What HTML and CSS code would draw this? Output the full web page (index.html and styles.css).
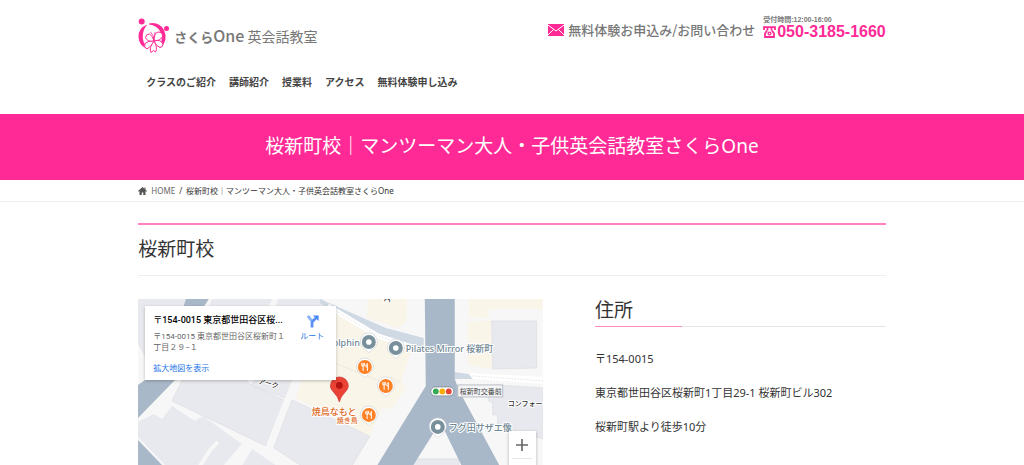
FILE: index.html
```html
<!DOCTYPE html>
<html lang="ja">
<head>
<meta charset="utf-8">
<meta name="viewport" content="width=device-width, initial-scale=1">
<title>桜新町校｜マンツーマン大人・子供英会話教室さくらOne</title>
<link rel="stylesheet" href="styles.css">
</head>
<body>
<header class="site-header">
  <div class="container">
    <div class="header-top">
      <a class="logo" href="#">
        <svg class="logo-mark" viewBox="0 0 32 36" aria-hidden="true">
          <g fill="#ff2a96">
            <circle cx="3.700" cy="3.500" r="3"/>
            <circle cx="28.500" cy="10.600" r="2.500"/>
            <path d="M9.500 6.500Q0 10 .5 19Q1 27 8 30.500L9 29Q4.500 25 4.800 18Q5 11 9.500 6.500Z"/>
            <path d="M11 5.500Q21 3.500 26 12Q30.500 22 22.500 30L21 29Q25.500 22 22.500 14Q19 7 11 6.500Z"/>
          </g>
          <g fill="#fff" stroke="#ff2a96" stroke-width="1" stroke-linejoin="round">
            <path d="M16 23Q15 16 20 14Q25 14 24.500 19Q22 23 16 23Z"/>
            <path d="M16 23Q23 21 25 26Q25 29 22 29.500Q18 28 16 23Z"/>
            <path d="M16 23Q20 30 17.500 34L15.500 32.500L13 34.500Q10.500 30 16 23Z"/>
            <path d="M16 23Q13 29 9 31Q5.500 29 7 25.500Q11 22 16 23Z"/>
            <path d="M16 23Q9 24 7.500 19.500Q8 16 11.500 16Q15 18 16 23Z"/>
            <path d="M16 23Q16 17 12.500 14M16 23Q17 17 17 14" fill="none" stroke-width=".8"/>
          </g>
        </svg>
        <span class="logo-text"><b>さくら<span class="logo-one">One</span></b> 英会話教室</span>
      </a>
      <div class="contact">
        <a class="contact-mail" href="#">
          <svg class="mail-icon" viewBox="0 0 16 12" aria-hidden="true">
            <rect width="16" height="12" fill="#ff2a96"/>
            <path d="M0 1L8 7L16 1M0 11L5.500 5.500M16 11L10.500 5.500" fill="none" stroke="#fff" stroke-width="1"/>
          </svg>
          <span>無料体験お申込み/お問い合わせ</span>
        </a>
        <div class="contact-tel">
          <span class="hours">受付時間:12:00-16:00</span>
          <a class="tel" href="tel:05031851660">
            <svg class="tel-icon" viewBox="0 0 13 12" fill="none" stroke="#ff2a96" aria-hidden="true">
              <path d="M1 4V1.200H12V4M4.500 1V4.500M8.500 1V4.500" stroke-width="1.800"/>
              <path d="M4 4.500L2 7.500V11H11V7.500L9 4.500" stroke-width="1.800"/>
              <circle cx="6.500" cy="7.500" r="1.400" stroke-width="1.400"/>
            </svg>
            <span>050-3185-1660</span>
          </a>
        </div>
      </div>
    </div>
    <nav class="global-nav">
      <a href="#">クラスのご紹介</a>
      <a href="#">講師紹介</a>
      <a href="#">授業料</a>
      <a href="#">アクセス</a>
      <a href="#">無料体験申し込み</a>
    </nav>
  </div>
</header>

<div class="page-title">桜新町校｜マンツーマン大人・子供英会話教室さくらOne</div>

<nav class="breadcrumb">
  <div class="container crumbs">
    <svg class="home-icon" viewBox="0 0 18 16" aria-hidden="true"><path d="M9 0L0 8L1.200 9.400L3 8V16H7.500V11H10.500V16H15V8L16.800 9.400L18 8L15 5.300V1H13V3.500Z" fill="#555"/></svg>
    <a href="#">HOME</a>
    <span>/</span>
    <span class="current">桜新町校｜マンツーマン大人・子供英会話教室さくらOne</span>
  </div>
</nav>

<main class="container">
  <h1 class="section-title">桜新町校</h1>
  <div class="columns">
    <div class="map">
      <svg class="map-canvas" viewBox="0 0 405 167" preserveAspectRatio="xMinYMin slice" role="img" aria-label="地図">
        <defs>
          <g id="pin">
            <path d="M0 11L-4 7A8.500 8.500 0 1 1 4 7Z" fill="#fff" stroke="#c9ccd0" stroke-width=".6"/>
            <circle r="7"/>
          </g>
          <g id="place"><use href="#pin" fill="#78909c"/><circle r="2.800" fill="#fff"/></g>
          <g id="food">
            <use href="#pin" fill="#ff8126"/>
            <path d="M-3 -4V-1M-1.700 -4V-1M-3 -1H-.5M-.5 -4V-1M-1.700 -1V4M2.500 4V-3.500Q1 -3 1 0H2.500" fill="none" stroke="#fff" stroke-width="1"/>
          </g>
        </defs>
        <rect width="405" height="167" fill="#f7f7f8"/>
        <g fill="#e8e9ee">
          <path d="M0 0H48L46 10L20 40L8 60L0 45Z"/>
          <path d="M74 0H135L128 10H70Z"/>
          <path d="M140 0H184L198 12H136Z"/>
          <path d="M55 60L34 102L128 147L148 102L113 86L90 65Z" stroke="#dcdde3" stroke-width=".7"/>
          <path d="M120 78H156L147 99L113 86Z" stroke="#dcdde3" stroke-width=".7"/>
          <path d="M0 123L16 115L24 120L34 107L57 122L65 117L104 145L85 167H28L0 138Z"/>
          <path d="M154 101L232 137L214 167H164L136 149Z" stroke="#dcdde3" stroke-width=".7"/>
          <path d="M114 150L139 167H104Z"/>
        </g>
        <path d="M62 167L73 150L80 143M130 147L156 82" stroke="#f7f7f8" stroke-width="4" fill="none"/>
        <g fill="#f9f5e9">
          <path d="M180 8L198 13L276 44L263 84L269 87L254 110L244 109L232 137L158 99L164 80Z"/>
          <path d="M230 0H269V18Q268 28 258 29L247 24L229 19Z"/>
          <path d="M331 0H405V10H351V19L331 18Z"/>
          <path d="M330 23L354 21V70L330 66Z"/>
        </g>
        <path d="M191 62L247 84M253 78L263 84" stroke="#eee9df" fill="none"/>
        <g fill="#e8e9ee" stroke="#dcdde3" stroke-width=".7">
          <path d="M354 22H399V69L355 70Z"/>
          <path d="M358 86L405 89V140L371 130L360 125V116H355V104L351 102V92Z"/>
          <path d="M272 160H321V168H272Z"/>
        </g>
        <path d="M182 0L248 29L286 39V51L273 51L243 38L182 4Z" fill="#cfd9e3"/>
        <path d="M190 7L240 37L274 48" fill="none" stroke="#fff" stroke-width="5"/>
        <path d="M190 7L240 37L274 48" fill="none" stroke="#dadddf" stroke-dasharray="1 2"/>
        <path d="M316 73L331 75L335 80H317Z" fill="#cfd9e3"/>
        <path d="M331 74L405 78V85L335 80Z" fill="#fff"/>
        <path d="M335 77L405 82" stroke="#d4d7da" stroke-dasharray="1 2"/>
        <g fill="#a9b8c9">
          <path d="M287 0H317V80L321 91L362 167H324L306 130L297 132L275 167H239L288 87Z"/>
          <path d="M48 0H71L65 9H45Z"/>
          <path d="M0 86L14 76L38 80L0 119Z"/>
          <path d="M0 141L25 167H0Z"/>
        </g>
        <g class="map-labels">
          <text class="place-label" x="222" y="47" text-anchor="end">Dolphin</text>
          <text class="place-label" x="268" y="53">Pilates Mirror 桜新町</text>
          <text class="place-label" x="311" y="132">フグ田サザエ像</text>
          <text class="food-label" x="174" y="116">焼鳥なもと</text>
          <text class="food-label small" x="199" y="124">焼き鳥</text>
          <text class="building-label" x="370" y="107">コンフォー</text>
          <text class="building-label" transform="translate(120 84) rotate(16)">アーク</text>
          <text class="building-label" transform="translate(247 -3) rotate(90)">て</text>
        </g>
        <rect x="320" y="86" width="45" height="12" fill="#f4f5f7" stroke="#b9bdc3"/>
        <text class="crossing-label" x="322" y="95">桜新町交番前</text>
        <rect x="293" y="88" width="23" height="9" rx="4.500" fill="#fff" stroke="#7f8790" stroke-width=".8"/>
        <circle cx="298" cy="92.500" r="2.900" fill="#34a853"/>
        <circle cx="304.500" cy="92.500" r="2.900" fill="#fbab05"/>
        <circle cx="311" cy="92.500" r="2.900" fill="#ea4335"/>
        <use href="#place" x="231" y="43"/>
        <use href="#place" x="258" y="49"/>
        <use href="#place" x="300" y="128"/>
        <use href="#food" x="227" y="68"/>
        <use href="#food" x="248" y="87"/>
        <use href="#food" x="231" y="116"/>
        <path d="M201.500 103Q200.500 98 196 93.500Q192.500 90 192.500 87A9 9 0 0 1 210.500 87Q210.500 90 207 93.500Q202.500 98 201.500 103Z" fill="#ea4335" stroke="#c5221f" stroke-width=".6"/>
        <circle cx="201.500" cy="86.500" r="3.400" fill="#b31412"/>
      </svg>
      <div class="map-card">
        <div class="map-address">
          <strong>〒154-0015 東京都世田谷区桜...</strong>
          <p>〒154-0015 東京都世田谷区桜新町１丁目２９−１</p>
          <a href="#">拡大地図を表示</a>
        </div>
        <a class="map-route" href="#">
          <svg class="route-icon" viewBox="0 0 14 14" fill="none" aria-hidden="true">
            <path d="M2 1.500L7 8" stroke="#8ab4f8" stroke-width="3"/>
            <path d="M6.500 14V9Q6.500 8 7.500 7L10.500 4" stroke="#5b8ff5" stroke-width="3"/>
            <path d="M7.500 1H13.500V7Z" fill="#4285f4"/>
          </svg>
          <span>ルート</span>
        </a>
      </div>
      <button class="map-zoom" type="button" aria-label="拡大">
        <svg class="plus-icon" viewBox="0 0 12 12" aria-hidden="true"><path d="M6 0V12M0 6H12" stroke="#666" stroke-width="1.600"/></svg>
      </button>
    </div>
    <section class="address">
      <h2 class="address-title">住所</h2>
      <p>〒154-0015</p>
      <p>東京都世田谷区桜新町1丁目29-1 桜新町ビル302</p>
      <p>桜新町駅より徒歩10分</p>
    </section>
  </div>
</main>
</body>
</html>
```

FILE: styles.css
```css
* {
  box-sizing: border-box;
}

body {
  margin: 0;
  background: #fff;
  color: #333;
  font-family: "Noto Sans", "Noto Sans CJK JP", sans-serif;
  font-size: 11px;
}

a {
  color: inherit;
  text-decoration: none;
}

svg {
  display: block;
}

.container {
  width: 73%;
  margin: 0 auto;
}

/* Header */
.site-header {
  padding: 16px 0 24px;
}

.header-top {
  display: flex;
  justify-content: space-between;
  align-items: flex-start;
}

.logo {
  display: flex;
  align-items: center;
  gap: 4px;
  padding-top: 2px;
  color: #777;
}

.logo-mark {
  width: 32px;
  height: 36px;
}

.logo-text {
  font-family: "Noto Sans CJK JP", sans-serif;
  font-size: 14px;
  line-height: 20px;
  white-space: nowrap;
}

.logo-text b {
  font-size: 13px;
  font-weight: 700;
}

.logo-text .logo-one {
  font-size: 16px;
  font-weight: 500;
}

.contact {
  display: flex;
  gap: 8px;
  color: #777;
  white-space: nowrap;
}

.contact-mail {
  display: flex;
  align-items: center;
  gap: 4px;
  padding-top: 4px;
  font: 500 13px/20px "Noto Sans CJK JP", sans-serif;
}

.mail-icon {
  width: 16px;
  height: 12px;
}

.contact-tel {
  display: flex;
  flex-direction: column;
}

.hours {
  font: 700 7px/8px "Liberation Sans", "Noto Sans CJK JP", sans-serif;
}

.tel {
  display: flex;
  align-items: center;
  gap: 1px;
  color: #ff2a96;
  font: 700 16px/16px "Liberation Sans", sans-serif;
}

.tel-icon {
  width: 13px;
  height: 12px;
}

.global-nav {
  display: flex;
  gap: 13px;
  padding: 20px 8px 0;
  color: #444;
  font-size: 10px;
  font-weight: 700;
  line-height: 16px;
}

/* Page title and breadcrumb */
.page-title {
  padding: 18px 0 20px;
  background: #ff2a96;
  color: #fff;
  font-size: 19px;
  line-height: 28px;
  text-align: center;
}

.breadcrumb {
  border-bottom: 1px solid #eee;
  font-size: 8px;
  line-height: 21px;
}

.crumbs {
  display: flex;
  align-items: center;
  gap: 4px;
}

.home-icon {
  width: 9px;
  height: 8px;
}

.crumbs a {
  color: #666;
}

/* Main content */
.section-title {
  margin: 21px 0 23px;
  padding: 10px 0 12px;
  border-top: 2px solid #ff7fc0;
  border-bottom: 1px solid #eee;
  font-size: 19px;
  font-weight: 400;
  line-height: 28px;
}

.columns {
  display: grid;
  grid-template-columns: 405fr 291fr;
  gap: 52px;
}

.map {
  position: relative;
  overflow: hidden;
}

.map-canvas {
  width: 100%;
}

.map-labels text {
  paint-order: stroke;
  stroke: #fff;
  stroke-width: 2px;
  stroke-linejoin: round;
}

.place-label {
  fill: #6f8794;
  font-size: 9px;
  font-weight: 500;
}

.food-label {
  fill: #e0691c;
  font-size: 9px;
  font-weight: 500;
}

.food-label.small {
  font-size: 7px;
}

.building-label {
  fill: #333;
  font-size: 7px;
  font-weight: 500;
}

.crossing-label {
  fill: #444;
  font-size: 7px;
}

.map-card {
  position: absolute;
  top: 7px;
  left: 7px;
  display: flex;
  justify-content: space-between;
  width: 191px;
  padding: 8px 12px 6px 8px;
  background: #fff;
  box-shadow: 0 1px 3px rgba(0, 0, 0, .25);
  color: #666;
  font: 8px/11px Roboto, "Noto Sans CJK JP", sans-serif;
}

.map-address {
  width: 136px;
}

.map-address strong {
  display: block;
  color: #000;
  font-size: 9px;
  font-weight: 500;
  line-height: 12px;
  white-space: nowrap;
}

.map-address p {
  margin: 5px 0 10px;
}

.map-card a {
  color: #1a73e8;
}

.map-route {
  display: flex;
  flex-direction: column;
  align-items: center;
  gap: 3px;
}

.route-icon {
  width: 13px;
  height: 14px;
}

.map-zoom {
  position: absolute;
  right: 7px;
  bottom: 0;
  display: flex;
  justify-content: center;
  width: 27px;
  height: 35px;
  padding: 8px 0 0;
  border: 0;
  background: linear-gradient(#e6e6e6, #e6e6e6) center 27px / 20px 1px no-repeat #fff;
  box-shadow: 0 1px 3px rgba(0, 0, 0, .3);
}

.plus-icon {
  width: 12px;
  height: 12px;
}

.address p {
  margin: 0 0 17px;
  line-height: 17px;
}

.address-title {
  margin: 0 0 23px;
  padding-bottom: 6px;
  background:
    linear-gradient(#ff8cc6, #ff8cc6) left bottom / 30% 1px no-repeat,
    linear-gradient(#e5e5e5, #e5e5e5) left bottom / 100% 1px no-repeat;
  font-size: 19px;
  font-weight: 400;
  line-height: 22px;
}
```
